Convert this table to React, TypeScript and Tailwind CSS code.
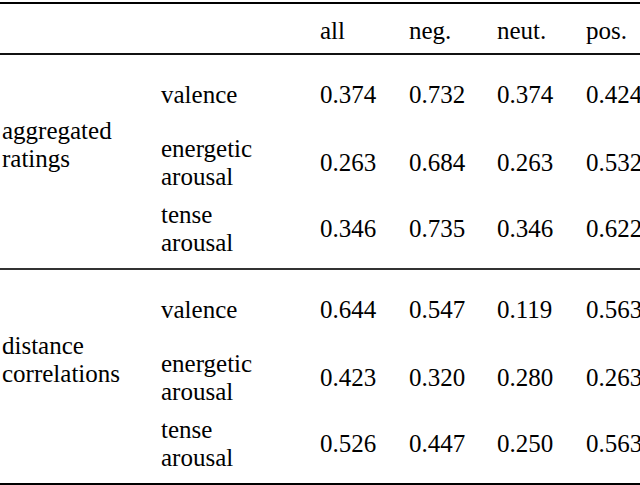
const sections = [
  {
    label: ["aggregated", "ratings"],
    rows: [
      { name: ["valence"], values: ["0.374", "0.732", "0.374", "0.424"] },
      { name: ["energetic", "arousal"], values: ["0.263", "0.684", "0.263", "0.532"] },
      { name: ["tense", "arousal"], values: ["0.346", "0.735", "0.346", "0.622"] },
    ],
  },
  {
    label: ["distance", "correlations"],
    rows: [
      { name: ["valence"], values: ["0.644", "0.547", "0.119", "0.563"] },
      { name: ["energetic", "arousal"], values: ["0.423", "0.320", "0.280", "0.263"] },
      { name: ["tense", "arousal"], values: ["0.526", "0.447", "0.250", "0.563"] },
    ],
  },
];

const rowGaps = ["mt-[26px]", "mt-[26px]", "mt-[10px]"];

function Values({ values }: { values: string[] }) {
  return (
    <div className="flex items-center">
      <div className="w-[89px]">{values[0]}</div>
      <div className="w-[88px]">{values[1]}</div>
      <div className="w-[89px]">{values[2]}</div>
      <div className="whitespace-nowrap">{values[3]}</div>
    </div>
  );
}

function Section({ label, rows }: (typeof sections)[number]) {
  return (
    <div className="flex h-[213px] pl-[2px]">
      <div className="w-[159px] shrink-0 pt-[62px]">
        {label.map((l) => (
          <div key={l}>{l}</div>
        ))}
      </div>
      <div className="flex flex-col">
        {rows.map((r, i) => (
          <div key={i} className={`flex items-center ${rowGaps[i]}`}>
            <div className="w-[159px] shrink-0">
              {r.name.map((n) => (
                <div key={n}>{n}</div>
              ))}
            </div>
            <Values values={r.values} />
          </div>
        ))}
      </div>
    </div>
  );
}

export default function App() {
  return (
    <div className="h-[485px] w-[640px] overflow-hidden bg-white pt-[2px] [font-family:Liberation_Serif,Times_New_Roman,Times,DejaVu_Serif,serif] text-[25px] leading-[28px] text-black">
      <div className="border-t-2 border-black" />
      <div className="flex h-[49px] pl-[2px] pt-[13px]">
        <div className="w-[318px] shrink-0" />
        <div className="w-[89px]">all</div>
        <div className="w-[88px]">neg.</div>
        <div className="w-[89px]">neut.</div>
        <div>pos.</div>
      </div>
      <div className="border-t-2 border-[#111]" />
      <Section {...sections[0]} />
      <div className="border-t-2 border-[#333]" />
      <Section {...sections[1]} />
      <div className="border-t-2 border-black" />
    </div>
  );
}
